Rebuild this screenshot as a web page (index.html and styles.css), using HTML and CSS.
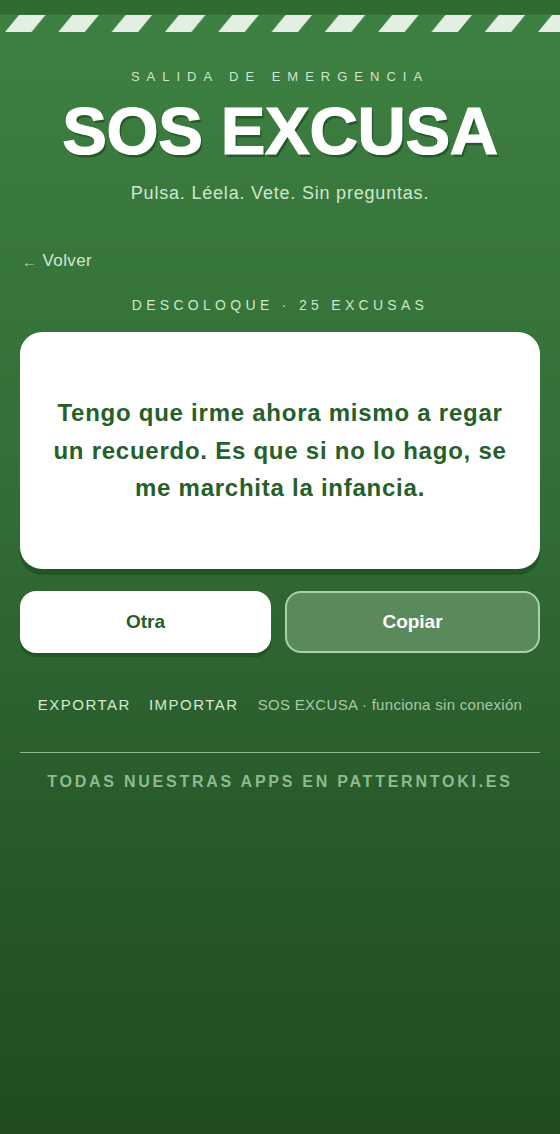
FILE: index.html
```html
<!DOCTYPE html>
<html lang="es">
<head>
<meta charset="utf-8">
<title>SOS EXCUSA</title>
<link rel="stylesheet" href="styles.css">
</head>
<body>
<div class="hazard" aria-hidden="true">
  <svg class="hazard-svg" width="560" height="33" viewBox="0 0 560 33">
    <defs>
      <pattern id="stripes" patternUnits="userSpaceOnUse" x="5" y="15" width="53.3" height="17">
        <polygon points="0,17 26.5,17 40.5,0 14,0" fill="#e3efe2"/>
      </pattern>
    </defs>
    <rect x="0" y="0" width="560" height="14.5" fill="#2f6c33"/>
    <rect x="0" y="15" width="560" height="17" fill="url(#stripes)"/>
  </svg>
</div>
<main class="page">
  <header class="hero">
    <p class="eyebrow">SALIDA DE EMERGENCIA</p>
    <h1 class="title">SOS EXCUSA</h1>
    <p class="tagline">Pulsa. Léela. Vete. Sin preguntas.</p>
  </header>

  <a class="back" href="#"><span class="back-arrow">←</span> Volver</a>

  <p class="category">DESCOLOQUE · 25 EXCUSAS</p>

  <section class="card">
    <p class="excuse">Tengo que irme ahora mismo a regar un recuerdo. Es que si no lo hago, se me marchita la infancia.</p>
  </section>

  <div class="actions">
    <button class="btn btn-solid" type="button">Otra</button>
    <button class="btn btn-ghost" type="button">Copiar</button>
  </div>

  <div class="tools">
    <a class="tool-link" href="#">EXPORTAR</a>
    <a class="tool-link" href="#">IMPORTAR</a>
    <span class="tool-note">SOS EXCUSA · funciona sin conexión</span>
  </div>

  <hr class="divider">

  <a class="promo" href="#">TODAS NUESTRAS APPS EN PATTERNTOKI.ES</a>
</main>
</body>
</html>
```

FILE: styles.css
```css
* {
  box-sizing: content-box;
}

html, body {
  margin: 0;
  padding: 0;
}

body {
  min-height: 1134px;
  background: linear-gradient(180deg, #3e8042 0%, #336f37 40%, #27592a 75%, #204b21 100%);
  font-family: "Liberation Sans", Arial, sans-serif;
  color: #d0e6ce;
}

.hazard {
  height: 33px;
}

.hazard-svg {
  display: block;
}

.page {
  padding: 0 20px;
  display: flex;
  flex-direction: column;
}

.hero {
  display: flex;
  flex-direction: column;
  align-items: center;
  padding-top: 35px;
}

.eyebrow {
  margin: 0;
  font-size: 13px;
  line-height: 18px;
  letter-spacing: 7px;
  color: #cfe5cd;
}

.title {
  margin: 9px 0 0;
  font-size: 67px;
  line-height: 72px;
  font-weight: 700;
  letter-spacing: -0.4px;
  color: #ffffff;
  -webkit-text-stroke: 1.2px #ffffff;
  text-shadow: 2px 3px 0 #245a29;
}

.tagline {
  margin: 14px 0 0;
  font-size: 18px;
  line-height: 24px;
  letter-spacing: 0.8px;
  color: #d0e7ce;
}

.back {
  margin-top: 45px;
  align-self: flex-start;
  padding-left: 2px;
  font-size: 17px;
  line-height: 22px;
  letter-spacing: 0.4px;
  color: #d2e8d0;
  text-decoration: none;
}

.back-arrow {
  font-size: 15px;
  color: #b3d4b1;
  position: relative;
  top: 1px;
}

.category {
  margin: 24px 0 0;
  text-align: center;
  font-size: 14px;
  line-height: 18px;
  letter-spacing: 4.3px;
  color: #cfe5cd;
}

.card {
  margin-top: 18px;
  background: #ffffff;
  border-radius: 22px;
  padding: 62px 30px;
  box-shadow: 0 6px 0 #215522;
}

.excuse {
  margin: 0;
  text-align: center;
  font-size: 24px;
  line-height: 37.5px;
  font-weight: 700;
  letter-spacing: 0.75px;
  color: #25602a;
}

.actions {
  margin-top: 22px;
  display: flex;
  gap: 14px;
  align-items: stretch;
}

.btn {
  flex: 1 1 0;
  font-family: "Liberation Sans", Arial, sans-serif;
  font-size: 19px;
  line-height: 24px;
  font-weight: 700;
  border-radius: 16px;
  cursor: pointer;
}

.btn-solid {
  border: 0;
  padding: 19px 0;
  background: #ffffff;
  color: #245e29;
  box-shadow: 0 4px 0 #215522;
}

.btn-ghost {
  border: 2px solid #a9d1a7;
  padding: 17px 0;
  background: #5a8a5c;
  color: #ffffff;
}

.tools {
  margin-top: 42px;
  display: flex;
  justify-content: center;
  align-items: baseline;
  gap: 18px;
  font-size: 15px;
  line-height: 20px;
}

.tool-link {
  letter-spacing: 1.5px;
  color: #d6ead4;
  text-decoration: none;
}

.tool-note {
  margin-left: 1px;
  letter-spacing: 0.3px;
  color: #a8c9a6;
}

.divider {
  margin: 37px 0 0;
  border: 0;
  height: 1px;
  background: #8fb58e;
}

.promo {
  margin-top: 19px;
  text-align: center;
  font-size: 16px;
  line-height: 20px;
  font-weight: 700;
  letter-spacing: 2.75px;
  color: #8fba8e;
  text-decoration: none;
}
```
